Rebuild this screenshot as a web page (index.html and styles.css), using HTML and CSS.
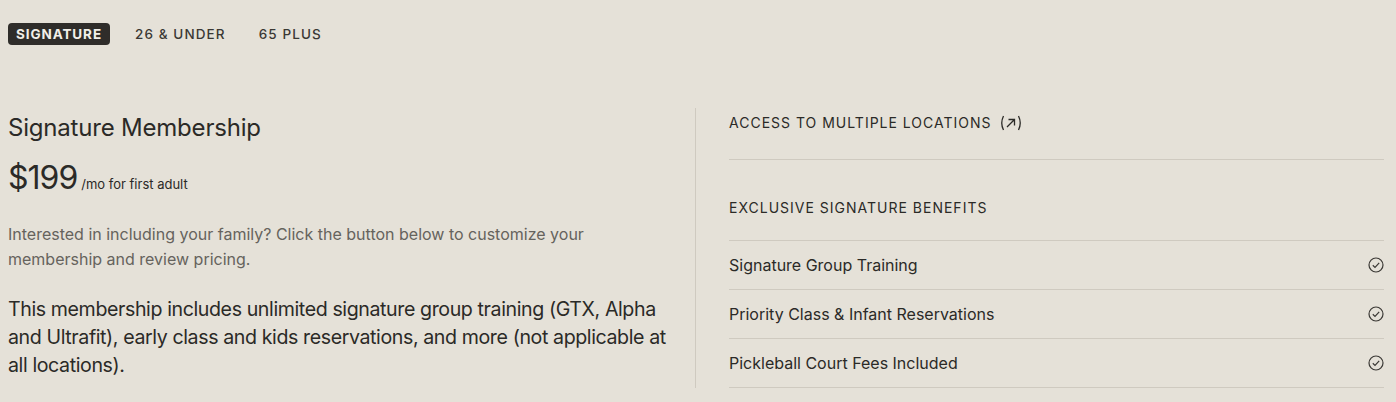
FILE: index.html
```html
<!DOCTYPE html>
<html lang="en">
<head>
    <meta charset="UTF-8">
    <meta name="viewport" content="width=device-width, initial-scale=1.0">
    <title>Memberships</title>
    <link rel="stylesheet" href="styles.css">
</head>
<body>
    <!-- Membership type tabs -->
    <nav class="tabs">
        <span class="tab active">SIGNATURE</span>
        <span class="tab">26 &amp; UNDER</span>
        <span class="tab">65 PLUS</span>
    </nav>

    <section class="plan">
        <div class="plan-info">
            <h2 class="plan-title">Signature Membership</h2>
            <div class="price"><span class="amount">$199</span> <span class="per">/mo for first adult</span></div>
            <p class="note">Interested in including your family? Click the button below to customize your membership and review pricing.</p>
            <p class="desc">This membership includes unlimited signature group training (GTX, Alpha and Ultrafit), early class and kids reservations, and more (not applicable at all locations).</p>
        </div>

        <div class="plan-benefits">
            <div class="access">
                ACCESS TO MULTIPLE LOCATIONS
                <svg class="ext" width="24" height="18" viewBox="0 0 24 18" fill="none" stroke="currentColor" stroke-width="1.3">
                    <path d="M4.5 2 Q1 9 4.5 16"/>
                    <path d="M19.5 2 Q23 9 19.5 16"/>
                    <path d="M8 13 L15.5 5.5 M9.5 5.5 H15.5 V11.5"/>
                </svg>
            </div>
            <h3 class="benefits-title">EXCLUSIVE SIGNATURE BENEFITS</h3>
            <ul class="benefits">
                <li>Signature Group Training <svg class="check" width="16" height="16" viewBox="0 0 16 16" fill="none" stroke="currentColor" stroke-width="1.2"><circle cx="8" cy="8" r="7"/><path d="M4.8 8.3 L7 10.4 L11.2 5.8"/></svg></li>
                <li>Priority Class &amp; Infant Reservations <svg class="check" width="16" height="16" viewBox="0 0 16 16" fill="none" stroke="currentColor" stroke-width="1.2"><circle cx="8" cy="8" r="7"/><path d="M4.8 8.3 L7 10.4 L11.2 5.8"/></svg></li>
                <li>Pickleball Court Fees Included <svg class="check" width="16" height="16" viewBox="0 0 16 16" fill="none" stroke="currentColor" stroke-width="1.2"><circle cx="8" cy="8" r="7"/><path d="M4.8 8.3 L7 10.4 L11.2 5.8"/></svg></li>
            </ul>
        </div>
    </section>
</body>
</html>
```

FILE: styles.css
```css
body {
    margin: 0;
    padding: 23px 12px 0 8px;
    background-color: #e5e1d8;
    color: #2b2a27;
    font-family: Inter, "Liberation Sans", sans-serif;
    overflow: hidden;
}
.tabs {
    display: flex;
    gap: 17px;
    align-items: center;
}
.tab {
    display: inline-block;
    padding: 4px 8px;
    font-size: 13.5px;
    font-weight: 500;
    letter-spacing: 1.1px;
    line-height: 14px;
    border-radius: 4px;
    color: #3a3834;
}
.tab.active {
    background-color: #2f2d2a;
    color: #f2efe8;
    font-weight: 700;
    letter-spacing: 0.9px;
}
.plan {
    display: flex;
    margin-top: 63px;
}
.plan-info {
    width: 688px;
    padding-top: 4px;
    padding-right: 18px;
    box-sizing: border-box;
    border-right: 1px solid #cfcac0;
}
.plan-title {
    margin: 0;
    font-size: 24px;
    font-weight: 400;
    line-height: 32px;
    letter-spacing: -0.2px;
}
.price {
    margin-top: 15px;
    display: flex;
    align-items: baseline;
}
.amount {
    font-size: 32px;
    line-height: 38px;
    letter-spacing: -1px;
}
.per {
    font-size: 13px;
    margin-left: 4px;
}
.note {
    margin: 25px 0 0;
    max-width: 600px;
    font-size: 16px;
    line-height: 25px;
    color: #66635d;
}
.desc {
    margin: 23px 0 0;
    font-size: 19.6px;
    line-height: 28px;
    letter-spacing: -0.4px;
}
.plan-benefits {
    flex: 1;
    padding-left: 33px;
}
.access {
    display: flex;
    align-items: center;
    gap: 7px;
    font-size: 14px;
    letter-spacing: 1px;
    line-height: 20px;
    padding: 5px 0 26px;
    border-bottom: 1px solid #cfcac0;
}
.benefits-title {
    margin: 38px 0 0;
    font-size: 14px;
    font-weight: 400;
    letter-spacing: 1px;
    line-height: 20px;
    padding-bottom: 22px;
    border-bottom: 1px solid #cfcac0;
}
.benefits {
    list-style: none;
    margin: 0;
    padding: 0;
}
.benefits li {
    display: flex;
    justify-content: space-between;
    align-items: center;
    height: 48px;
    font-size: 16px;
    border-bottom: 1px solid #cfcac0;
}
.check {
    color: #3a3834;
}
```
